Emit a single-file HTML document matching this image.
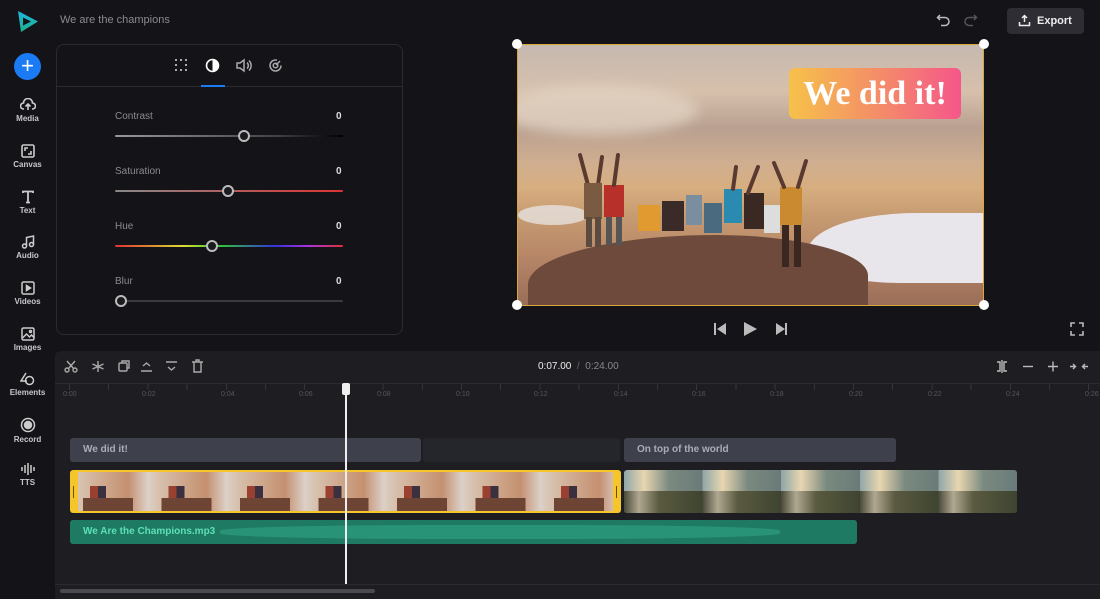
<!DOCTYPE html>
<html><head><meta charset="utf-8"><style>
*{box-sizing:border-box;margin:0;padding:0}
body{width:1100px;height:599px;background:#141318;font-family:"Liberation Sans",sans-serif;position:relative;overflow:hidden;color:#ddd}
.abs{position:absolute}
.si{position:absolute;left:0;width:55px;text-align:center;font-size:8px;font-weight:bold;color:#c8c8cc}
.si svg{display:block;margin:0 auto 2px}
.lbl{font-size:10px;color:#8a8a90}
.val{font-size:10px;color:#ddd;font-weight:bold}
.track{height:2px;border-radius:1px}
.knob{width:12px;height:12px;border-radius:50%;border:2px solid #bbb;background:#1a1a1f;position:absolute}
.tick{position:absolute;top:391px;font-size:7px;color:#55555b}
</style></head><body>
<svg class="abs" style="left:16px;top:10px" width="24" height="24" viewBox="0 0 24 24"><defs><linearGradient id="lg" x1="0" y1="0" x2="0" y2="1"><stop offset="0" stop-color="#1fb6e0"/><stop offset="1" stop-color="#1ab08a"/></linearGradient></defs><path d="M2 1 L22 11.5 L5 22 Z" fill="url(#lg)"/><path d="M7 7.5 L15 11.5 L7 15.5Z" fill="#141318"/></svg>
<div class="abs" style="left:60px;top:14px;font-size:11px;color:#8a8a90">We are the champions</div>
<div class="abs" style="left:14px;top:53px;width:27px;height:27px;border-radius:50%;background:#1a7bf5;color:#fff;font-size:22px;line-height:26px;text-align:center">+</div>
<div class="si" style="top:98px"><svg width="16" height="14" viewBox="0 0 16 14" fill="none" stroke="#ccc" stroke-width="1.6"><path d="M4 11H3.5a3 3 0 0 1 0-6A4.5 4.5 0 0 1 12.5 5a3 3 0 0 1 0 6H12M8 12V6M5.5 8.5 8 6l2.5 2.5"/></svg>Media</div>
<div class="si" style="top:144px"><svg width="14" height="14" viewBox="0 0 14 14" fill="none" stroke="#ccc" stroke-width="1.6"><rect x="1" y="1" width="12" height="12" rx="1.5"/><path d="M4 7V4h3M10 7v3H7"/></svg>Canvas</div>
<div class="si" style="top:190px"><svg width="14" height="14" viewBox="0 0 14 14" fill="none" stroke="#ccc" stroke-width="1.8"><path d="M2 3V1.5h10V3M7 1.5V12.5M5 12.5h4"/></svg>Text</div>
<div class="si" style="top:235px"><svg width="14" height="14" viewBox="0 0 14 14" fill="none" stroke="#ccc" stroke-width="1.5"><circle cx="3.5" cy="11" r="2"/><circle cx="10.5" cy="9.5" r="2"/><path d="M5.5 11V2.5l7-1.5v8.5"/></svg>Audio</div>
<div class="si" style="top:281px"><svg width="14" height="14" viewBox="0 0 14 14" fill="none" stroke="#ccc" stroke-width="1.5"><rect x="1" y="1" width="12" height="12" rx="1.5"/><path d="M5.5 4.5v5l4-2.5z" fill="#ccc"/></svg>Videos</div>
<div class="si" style="top:327px"><svg width="14" height="14" viewBox="0 0 14 14" fill="none" stroke="#ccc" stroke-width="1.5"><rect x="1" y="1" width="12" height="12" rx="1.5"/><path d="M1.5 11l4-4 3 3 2-2 2.5 2.5"/><circle cx="9.5" cy="4.5" r="1"/></svg>Images</div>
<div class="si" style="top:372px"><svg width="16" height="14" viewBox="0 0 16 14" fill="none" stroke="#ccc" stroke-width="1.5"><path d="M6 1L1 9h6"/><circle cx="9.5" cy="8.5" r="4"/></svg>Elements</div>
<div class="si" style="top:417px"><svg width="16" height="16" viewBox="0 0 16 16" fill="none" stroke="#ccc" stroke-width="1.5"><circle cx="8" cy="8" r="6.5"/><circle cx="8" cy="8" r="3.5" fill="#ccc"/></svg>Record</div>
<div class="si" style="top:462px"><svg width="16" height="14" viewBox="0 0 16 14" fill="none" stroke="#ccc" stroke-width="1.5"><path d="M2 5v4M5 3v8M8 1v12M11 3v8M14 5v4"/></svg>TTS</div>

<div class="abs" style="left:56px;top:44px;width:347px;height:291px;border:1px solid #2a2a30;border-radius:8px;background:#141318"></div>
<div class="abs" style="left:57px;top:86px;width:345px;height:1px;background:#2a2a30"></div>
<div class="abs" style="left:201px;top:85px;width:24px;height:2px;background:#1a7bf5"></div>
<svg class="abs" style="left:174px;top:58px" width="14" height="14" viewBox="0 0 14 14" fill="#aaa"><rect x="1" y="1" width="2" height="2"/><rect x="6" y="1" width="2" height="2"/><rect x="11" y="1" width="2" height="2"/><rect x="1" y="6" width="2" height="2"/><rect x="11" y="6" width="2" height="2"/><rect x="1" y="11" width="2" height="2"/><rect x="6" y="11" width="2" height="2"/><rect x="11" y="11" width="2" height="2"/></svg>
<svg class="abs" style="left:205px;top:58px" width="15" height="15" viewBox="0 0 15 15"><circle cx="7.5" cy="7.5" r="6" fill="none" stroke="#fff" stroke-width="1.6"/><path d="M7.5 1.5a6 6 0 0 1 0 12z" fill="#fff"/></svg>
<svg class="abs" style="left:236px;top:58px" width="16" height="15" viewBox="0 0 16 15" fill="none" stroke="#aaa" stroke-width="1.5"><path d="M1 5h3l4-3v11l-4-3H1z"/><path d="M11 4.5a4 4 0 0 1 0 6M13 2.5a7 7 0 0 1 0 10"/></svg>
<svg class="abs" style="left:268px;top:58px" width="15" height="15" viewBox="0 0 15 15" fill="none" stroke="#aaa" stroke-width="1.5"><path d="M13 7.5A5.5 5.5 0 1 1 9 2.2"/><circle cx="7.5" cy="7.5" r="2.3"/><path d="M8 7l4-4"/></svg>

<div class="abs lbl" style="left:115px;top:111px">Contrast</div><div class="abs val" style="left:336px;top:111px">0</div>
<div class="abs track" style="left:115px;top:135px;width:228px;background:linear-gradient(90deg,#999,#444 70%,#000)"></div><div class="knob" style="left:238px;top:130px"></div>
<div class="abs lbl" style="left:115px;top:166px">Saturation</div><div class="abs val" style="left:336px;top:166px">0</div>
<div class="abs track" style="left:115px;top:190px;width:228px;background:linear-gradient(90deg,#888,#d33)"></div><div class="knob" style="left:222px;top:185px"></div>
<div class="abs lbl" style="left:115px;top:221px">Hue</div><div class="abs val" style="left:336px;top:221px">0</div>
<div class="abs track" style="left:115px;top:245px;width:228px;background:linear-gradient(90deg,#d33,#dd3 30%,#3c3 45%,#33d 70%,#a3d 85%,#d33)"></div><div class="knob" style="left:206px;top:240px"></div>
<div class="abs lbl" style="left:115px;top:276px">Blur</div><div class="abs val" style="left:336px;top:276px">0</div>
<div class="abs track" style="left:115px;top:300px;width:228px;background:#3a3a40"></div><div class="knob" style="left:115px;top:295px"></div>

<svg class="abs" style="left:936px;top:13px" width="15" height="14" viewBox="0 0 15 14" fill="none" stroke="#bbb" stroke-width="1.5"><path d="M4 2L1.5 4.5 4 7M1.5 4.5H9a4 4 0 0 1 0 8H5"/></svg>
<svg class="abs" style="left:963px;top:13px" width="15" height="14" viewBox="0 0 15 14" fill="none" stroke="#555" stroke-width="1.5"><path d="M11 2l2.5 2.5L11 7M13.5 4.5H6a4 4 0 0 0 0 8h4"/></svg>
<div class="abs" style="left:1007px;top:8px;width:77px;height:26px;background:#2d2d33;border-radius:4px;font-size:11px;font-weight:bold;color:#eee;line-height:26px;padding-left:30px">Export</div>
<svg class="abs" style="left:1018px;top:14px" width="13" height="13" viewBox="0 0 13 13" fill="none" stroke="#eee" stroke-width="1.5"><path d="M6.5 8V1.5M4 4l2.5-2.5L9 4M1.5 8v3.5h10V8"/></svg>

<!-- video -->
<div class="abs" style="left:517px;top:44px;width:467px;height:262px;border:1px solid #d9a63a;overflow:hidden;background:linear-gradient(180deg,#c6b9b0 0%,#d6c0ac 18%,#b9a090 32%,#cfae90 45%,#d7ae80 55%,#c79c72 65%,#b88868 80%,#9a6e58 100%)">
<div class="abs" style="left:-20px;top:40px;width:200px;height:50px;background:#e5d6c6;border-radius:50%;opacity:.7;filter:blur(6px)"></div>
<div class="abs" style="left:290px;top:168px;width:200px;height:70px;background:#e8e6ea;border-radius:60% 0 0 50%"></div>
<div class="abs" style="left:0;top:160px;width:70px;height:20px;background:#e6e2e0;opacity:.8;border-radius:50%"></div>
<div class="abs" style="left:10px;top:190px;width:340px;height:90px;background:#6e4a3c;border-radius:55% 45% 0 0"></div>
<svg class="abs" style="left:50px;top:100px" width="260" height="130" viewBox="0 0 260 130">
<g stroke-linecap="round">
<path d="M12 10 L20 40 M34 12 L30 40" stroke="#5a3a30" stroke-width="4"/>
<rect x="16" y="38" width="18" height="36" fill="#7a5a40"/><rect x="18" y="72" width="6" height="30" fill="#5a4a40"/><rect x="27" y="72" width="6" height="30" fill="#5a4a40"/>
<rect x="36" y="40" width="20" height="32" fill="#b8302a"/><rect x="38" y="72" width="6" height="28" fill="#555"/><rect x="48" y="72" width="6" height="28" fill="#555"/>
<path d="M50 10L46 40" stroke="#5a3a30" stroke-width="4"/>
<rect x="70" y="60" width="22" height="26" fill="#e09a30"/><rect x="94" y="56" width="22" height="30" fill="#3a2a28"/>
<rect x="118" y="50" width="16" height="30" fill="#7a8ea0"/><rect x="136" y="58" width="18" height="30" fill="#4a6a80"/>
<rect x="156" y="44" width="18" height="34" fill="#2a8ab0"/><rect x="176" y="48" width="20" height="36" fill="#3a2822"/>
<rect x="196" y="60" width="16" height="28" fill="#ddd"/><rect x="212" y="42" width="22" height="38" fill="#c98a30"/>
<path d="M216 42 L206 18 M230 42 L238 16 M180 48 L190 22 M165 44 L168 22" stroke="#5a3a30" stroke-width="4"/>
<rect x="214" y="80" width="7" height="42" fill="#3a2820"/><rect x="226" y="80" width="7" height="42" fill="#3a2820"/>
</g></svg>
</div>
<div class="abs" style="left:789px;top:68px;width:172px;height:51px;border-radius:6px;background:linear-gradient(90deg,#f6c14a,#f48a6a 55%,#f5568a);font-family:'Liberation Serif',serif;font-weight:bold;font-size:34px;color:#fff;text-align:center;line-height:51px">We did it!</div>
<div class="abs" style="left:512px;top:39px;width:10px;height:10px;border-radius:50%;background:#fff"></div>
<div class="abs" style="left:979px;top:39px;width:10px;height:10px;border-radius:50%;background:#fff"></div>
<div class="abs" style="left:512px;top:300px;width:10px;height:10px;border-radius:50%;background:#fff"></div>
<div class="abs" style="left:979px;top:300px;width:10px;height:10px;border-radius:50%;background:#fff"></div>
<svg class="abs" style="left:713px;top:321px" width="84" height="16" viewBox="0 0 84 16" fill="#bbb"><rect x="1" y="2" width="2" height="12"/><path d="M13 2L4 8l9 6z"/><path d="M31 1l13 7-13 7z"/><path d="M63 2l9 6-9 6z"/><rect x="72" y="2" width="2" height="12"/></svg>
<svg class="abs" style="left:1070px;top:322px" width="14" height="14" viewBox="0 0 14 14" fill="none" stroke="#bbb" stroke-width="1.6"><path d="M1 5V1h4M9 1h4v4M13 9v4H9M5 13H1V9"/></svg>

<div class="abs" style="left:55px;top:351px;width:1045px;height:248px;background:#1e1e22;border-radius:6px 0 0 0"></div>
<div class="abs" style="left:55px;top:383px;width:1045px;height:1px;background:#2a2a2f"></div>
<svg class="abs" style="left:64px;top:359px" width="145" height="15" viewBox="0 0 145 15" fill="none" stroke="#aaa" stroke-width="1.4"><circle cx="3" cy="11" r="2"/><circle cx="11" cy="11" r="2"/><path d="M4.5 9.5L11 2M9.5 9.5L3 2"/><path d="M34 2v11M28.5 5l11 5M28.5 10l11-5"/><rect x="55" y="4" width="8" height="8" rx="1"/><path d="M58 4V2h7v7h-2"/><path d="M77 12h11M79 7l3.5-3 3.5 3"/><path d="M102 3h11M104 8l3.5 3 3.5-3"/><path d="M128 3h11M130 3v10h7V3M132 3V1h3v2"/></svg>
<div class="abs" style="left:538px;top:361px;font-size:10px;color:#ddd"><span style="color:#eee">0:07.00</span> <span style="color:#666">&nbsp;/&nbsp;</span> <span style="color:#888">0:24.00</span></div>
<svg class="abs" style="left:995px;top:359px" width="95" height="15" viewBox="0 0 95 15" fill="none" stroke="#bbb" stroke-width="1.4"><path d="M2 3h3v9H2M12 3H9v9h3M7 1v13"/><path d="M28 7.5h10"/><path d="M53 7.5h10M58 2.5v10"/><path d="M75 7.5h5M78 5l2.5 2.5L78 10M93 7.5h-5M90 5l-2.5 2.5L90 10"/></svg>
<div class="abs" style="left:55px;top:384px;width:1045px;height:6px;background:repeating-linear-gradient(90deg,transparent 0 14px,#34343a 14px 15px,transparent 15px 39.2px)"></div>
<div class="tick" style="left:63px">0:00</div><div class="tick" style="left:142px">0:02</div><div class="tick" style="left:221px">0:04</div><div class="tick" style="left:299px">0:06</div><div class="tick" style="left:377px">0:08</div><div class="tick" style="left:456px">0:10</div><div class="tick" style="left:534px">0:12</div><div class="tick" style="left:614px">0:14</div><div class="tick" style="left:692px">0:16</div><div class="tick" style="left:770px">0:18</div><div class="tick" style="left:849px">0:20</div><div class="tick" style="left:928px">0:22</div><div class="tick" style="left:1006px">0:24</div><div class="tick" style="left:1085px">0:26</div>

<div class="abs" style="left:70px;top:438px;width:351px;height:24px;background:#3e414c;border-radius:3px;font-size:10px;font-weight:bold;color:#a9adba;line-height:24px;padding-left:13px">We did it!</div>
<div class="abs" style="left:423px;top:438px;width:197px;height:24px;background:#25262b;border-radius:3px"></div>
<div class="abs" style="left:624px;top:438px;width:272px;height:24px;background:#3e414c;border-radius:3px;font-size:10px;font-weight:bold;color:#a9adba;line-height:24px;padding-left:13px">On top of the world</div>

<div class="abs" style="left:70px;top:470px;width:551px;height:43px;background:#f5c52a;border-radius:3px;overflow:hidden">
<div class="abs" style="left:8px;top:2px;width:535px;height:39px;background:repeating-linear-gradient(90deg,#d8c4b2 0,#cda488 30px,#c49070 50px,#dcd0c8 70px,#d8c4b2 78.5px);overflow:hidden"><div style="position:absolute;left:0;bottom:0;width:100%;height:13px;background:repeating-linear-gradient(90deg,transparent 0 5px,#6e4434 5px 55px,transparent 55px 78.5px)"></div><div style="position:absolute;left:0;top:14px;width:100%;height:12px;background:repeating-linear-gradient(90deg,transparent 0 12px,#9a4030 12px 20px,#3a3040 20px 28px,transparent 28px 78.5px)"></div></div>
<div class="abs" style="left:3px;top:16px;width:1px;height:12px;background:#6a5000"></div>
<div class="abs" style="left:546px;top:16px;width:1px;height:12px;background:#6a5000"></div>
</div>
<div class="abs" style="left:624px;top:470px;width:393px;height:43px;border-radius:3px;overflow:hidden;background:repeating-linear-gradient(90deg,#8fa6a8 0,#e8d6b0 20px,#7a8a80 45px,#6a7a78 78.6px)"><div style="position:absolute;left:0;bottom:0;width:100%;height:22px;background:repeating-linear-gradient(90deg,#4a4a3a 0,#b0a890 15px,#5a5a40 35px,#3e4430 78.6px)"></div></div>

<div class="abs" style="left:70px;top:520px;width:787px;height:24px;background:#1f7a63;border-radius:3px;overflow:hidden"><div style="position:absolute;left:150px;top:5px;width:560px;height:14px;background:#2a9a7c;border-radius:40%;opacity:.8"></div><span style="position:relative;font-size:10px;font-weight:bold;color:#5ce0b5;line-height:24px;padding-left:13px">We Are the Champions.mp3</span></div>

<div class="abs" style="left:345px;top:384px;width:2px;height:200px;background:#eee"></div>
<div class="abs" style="left:342px;top:383px;width:8px;height:12px;border-radius:2px;background:#eee"></div>
<div class="abs" style="left:55px;top:584px;width:1045px;height:1px;background:#2a2a2f"></div>
<div class="abs" style="left:60px;top:589px;width:315px;height:4px;border-radius:2px;background:#4a4a50"></div>
</body></html>
